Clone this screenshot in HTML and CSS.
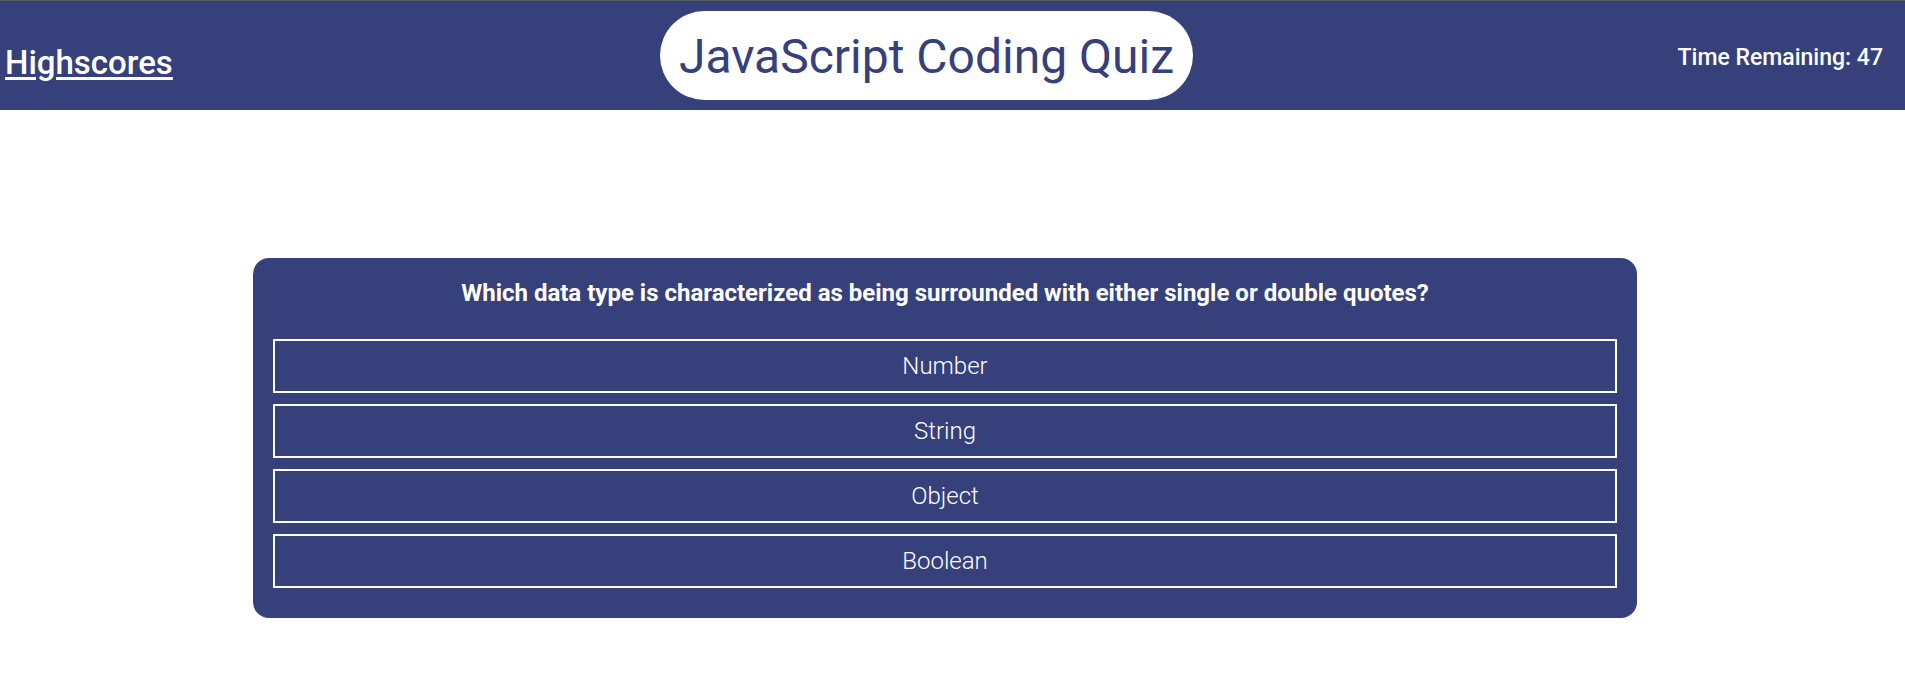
FILE: index.html
```html
<!DOCTYPE html>
<html lang="en">
<head>
<meta charset="utf-8">
<title>JavaScript Coding Quiz</title>
<link rel="stylesheet" href="styles.css">
</head>
<body>
<header class="topbar">
  <div class="left"><a class="highscores" href="#">Highscores</a></div>
  <h1 class="title">JavaScript Coding Quiz</h1>
  <div class="timer">Time Remaining: 47</div>
</header>
<main class="content">
  <section class="quiz">
    <h2 class="question">Which data type is characterized as being surrounded with either single or double quotes?</h2>
    <div class="options">
      <button class="option">Number</button>
      <button class="option">String</button>
      <button class="option">Object</button>
      <button class="option">Boolean</button>
    </div>
  </section>
</main>
</body>
</html>
```
FILE: styles.css
```css
* { box-sizing: border-box; }
html, body { margin: 0; padding: 0; background: #ffffff; }
body { font-family: "Roboto", "Liberation Sans", sans-serif; }

.topbar {
  display: flex;
  align-items: center;
  height: 110px;
  background: #36407b;
  border-top: 1px solid #5a5a5a;
}
.left {
  width: 660px;
  padding-left: 5px;
  padding-top: 14px;
}
.highscores {
  color: #ffffff;
  font-size: 33px;
  font-weight: 500;
  text-decoration: underline;
  text-underline-offset: 3px;
  text-decoration-thickness: 3px;
}
.title {
  margin: 0;
  width: 533px;
  height: 89px;
  background: #ffffff;
  color: #36407b;
  border-radius: 45px;
  font-size: 48px;
  font-weight: 400;
  padding-top: 2px;
  display: flex;
  align-items: center;
  justify-content: center;
}
.timer {
  flex: 1;
  text-align: right;
  padding-right: 22px;
  padding-top: 4px;
  color: #ffffff;
  font-size: 23px;
  font-weight: 500;
}

.content {
  padding-top: 148px;
}
.quiz {
  margin-left: 253px;
  width: 1384px;
  background: #36407b;
  border-radius: 16px;
  padding: 20px 20px 30px;
}
.question {
  margin: 0 0 31px;
  color: #ffffff;
  text-align: center;
  font-size: 24px;
  font-weight: 700;
  line-height: 30px;
}
.options {
  display: flex;
  flex-direction: column;
  gap: 11px;
}
.option {
  height: 54px;
  background: #36407b;
  border: 2px solid #ffffff;
  color: #ffffff;
  font-family: "Roboto", "Liberation Sans", sans-serif;
  font-size: 24px;
  font-weight: 300;
  padding: 0;
  cursor: pointer;
}
```
